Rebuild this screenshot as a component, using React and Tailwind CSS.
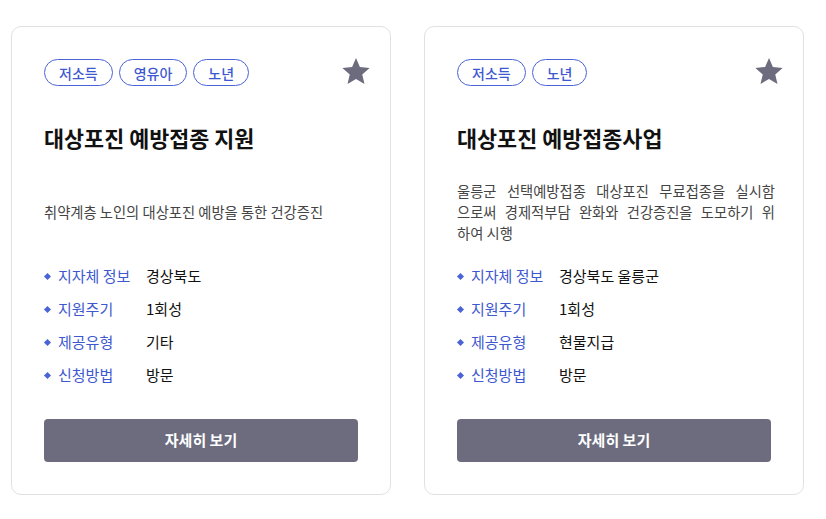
const cards = [
  {
    tags: ["저소득", "영유아", "노년"],
    title: "대상포진 예방접종 지원",
    desc: ["취약계층 노인의 대상포진 예방을 통한 건강증진"],
    info: [
      ["지자체 정보", "경상북도"],
      ["지원주기", "1회성"],
      ["제공유형", "기타"],
      ["신청방법", "방문"],
    ],
  },
  {
    tags: ["저소득", "노년"],
    title: "대상포진 예방접종사업",
    desc: [
      "울릉군 선택예방접종 대상포진 무료접종을 실시함",
      "으로써 경제적부담 완화와 건강증진을 도모하기 위",
      "하여 시행",
    ],
    info: [
      ["지자체 정보", "경상북도 울릉군"],
      ["지원주기", "1회성"],
      ["제공유형", "현물지급"],
      ["신청방법", "방문"],
    ],
  },
];

function StarIcon() {
  return (
    <svg width="30" height="30" viewBox="0 0 24 24">
      <path
        d="M12 1.6l3.1 7.2 7.8.7-5.9 5.2 1.8 7.7L12 18.3l-6.8 4.1 1.8-7.7L1.1 9.5l7.8-.7z"
        fill="#6c6c7e"
      />
    </svg>
  );
}

function Card({ card }) {
  return (
    <div className="relative w-[380px] border border-[#e1e1e4] rounded-[10px] bg-white px-8 pt-8 pb-8 flex flex-col">
      <button className="absolute top-[29px] right-[19px]">
        <StarIcon />
      </button>

      <div className="flex gap-[6px]">
        {card.tags.map((t) => (
          <span
            key={t}
            className="h-[27px] px-[14px] flex items-center rounded-full border border-[#4a63d6] text-[#3e58cf] text-[14px] font-medium leading-none"
          >
            {t}
          </span>
        ))}
      </div>

      <h2 className="mt-[38px] text-[21.8px] leading-[28px] font-bold text-[#111]">
        {card.title}
      </h2>

      {/* description block, vertically centred */}
      <div className="mt-[10px] h-[98px] flex flex-col justify-center mr-[-4px] text-[14.3px] leading-[21px] text-[#444]">
        {card.desc.map((line, i) => (
          <p
            key={i}
            className={
              i < card.desc.length - 1
                ? "text-justify [text-align-last:justify] whitespace-nowrap"
                : "whitespace-nowrap"
            }
          >
            {line}
          </p>
        ))}
      </div>

      <ul className="flex flex-col">
        {card.info.map(([k, v]) => (
          <li key={k} className="h-[33px] flex items-center text-[15px]">
            <span className="w-[5px] h-[5px] rotate-45 bg-[#4a63d6] ml-[1px] mr-[8px] shrink-0" />
            <span className="w-[88px] text-[#3e58cf]">{k}</span>
            <span className="text-[#111]">{v}</span>
          </li>
        ))}
      </ul>

      <button className="mt-[27px] h-[43px] w-full rounded-[4px] bg-[#6c6c7e] text-white text-[15px] font-bold">
        자세히 보기
      </button>
    </div>
  );
}

export default function App() {
  return (
    <div
      className="min-h-[519px] bg-white px-[11px] pt-[26px] flex gap-[33px] items-start"
      style={{ fontFamily: '"Noto Sans CJK KR", "Noto Sans", sans-serif' }}
    >
      {cards.map((c) => (
        <Card key={c.title} card={c} />
      ))}
    </div>
  );
}
